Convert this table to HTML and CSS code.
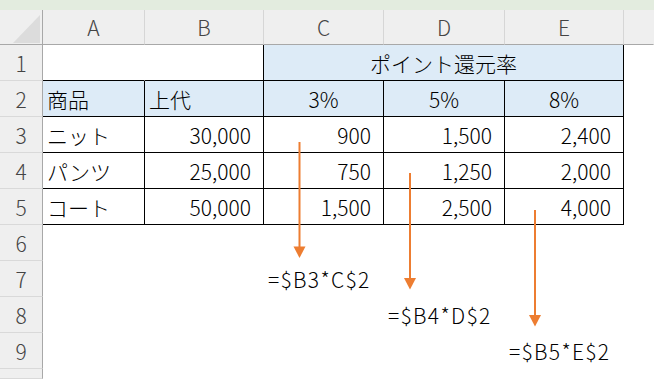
FILE: index.html
```html
<!DOCTYPE html>
<html lang="ja">
<head>
<meta charset="utf-8">
<title>ポイント還元率</title>
<link rel="stylesheet" href="styles.css">
</head>
<body>
<div class="app">
  <div class="topbar"></div>
  <div class="sheet">
    <div class="ch corner"><div class="tri"></div></div>
    <div class="ch">A</div>
    <div class="ch">B</div>
    <div class="ch">C</div>
    <div class="ch">D</div>
    <div class="ch">E</div>
    <div class="ch ch-last"></div>

    <div class="rh">1</div>
    <div class="c b-bottom"></div>
    <div class="c b-bottom b-right"></div>
    <div class="c fill b-right b-bottom center span3">ポイント還元率</div>
    <div class="c"></div>

    <div class="rh">2</div>
    <div class="c fill b-right b-bottom">商品</div>
    <div class="c fill b-right b-bottom">上代</div>
    <div class="c fill b-right b-bottom center">3%</div>
    <div class="c fill b-right b-bottom center">5%</div>
    <div class="c fill b-right b-bottom center">8%</div>
    <div class="c"></div>

    <div class="rh">3</div>
    <div class="c b-right b-bottom">ニット</div>
    <div class="c b-right b-bottom num">30,000</div>
    <div class="c b-right b-bottom num">900</div>
    <div class="c b-right b-bottom num">1,500</div>
    <div class="c b-right b-bottom num">2,400</div>
    <div class="c"></div>

    <div class="rh">4</div>
    <div class="c b-right b-bottom">パンツ</div>
    <div class="c b-right b-bottom num">25,000</div>
    <div class="c b-right b-bottom num">750</div>
    <div class="c b-right b-bottom num">1,250</div>
    <div class="c b-right b-bottom num">2,000</div>
    <div class="c"></div>

    <div class="rh">5</div>
    <div class="c b-right b-bottom">コート</div>
    <div class="c b-right b-bottom num">50,000</div>
    <div class="c b-right b-bottom num">1,500</div>
    <div class="c b-right b-bottom num">2,500</div>
    <div class="c b-right b-bottom num">4,000</div>
    <div class="c"></div>

    <div class="rh">6</div>
    <div class="c"></div><div class="c"></div><div class="c"></div><div class="c"></div><div class="c"></div><div class="c"></div>

    <div class="rh">7</div>
    <div class="c"></div><div class="c"></div>
    <div class="c formula">=$B3*C$2</div>
    <div class="c"></div><div class="c"></div><div class="c"></div>

    <div class="rh">8</div>
    <div class="c"></div><div class="c"></div><div class="c"></div>
    <div class="c formula">=$B4*D$2</div>
    <div class="c"></div><div class="c"></div>

    <div class="rh">9</div>
    <div class="c"></div><div class="c"></div><div class="c"></div><div class="c"></div>
    <div class="c formula">=$B5*E$2</div>
    <div class="c"></div>

    <div class="rh"></div>
    <div class="c"></div><div class="c"></div><div class="c"></div><div class="c"></div><div class="c"></div><div class="c"></div>

    <svg class="arrows" width="654" height="369" viewBox="0 10 654 369" aria-hidden="true">
      <g stroke="#ed7d31" stroke-width="2" fill="none">
        <line x1="299.5" y1="142" x2="299.5" y2="248"/>
        <line x1="410" y1="173" x2="410" y2="279"/>
        <line x1="535" y1="210" x2="535" y2="316"/>
      </g>
      <g fill="#ed7d31">
        <polygon points="293.5,246.5 305.5,246.5 299.5,258"/>
        <polygon points="404,278 416,278 410,289.5"/>
        <polygon points="529,315 541,315 535,326.5"/>
      </g>
    </svg>
  </div>
</div>
</body>
</html>
```
FILE: styles.css
```css
html, body {
  margin: 0;
  padding: 0;
  background: #ffffff;
}
body {
  width: 654px;
  height: 379px;
  overflow: hidden;
  font-family: "Noto Sans CJK JP", "Noto Sans", sans-serif;
  font-weight: 300;
}
.app {
  display: flex;
  flex-direction: column;
  height: 379px;
}
.topbar {
  height: 10px;
  background: #e3ecdf;
  flex: none;
}
.sheet {
  position: relative;
  flex: 1;
  display: grid;
  grid-template-columns: 43px 102px 119px 120px 121px 119px 1fr;
  grid-template-rows: 35px repeat(9, 36px) 1fr;
  overflow: hidden;
}
.ch, .rh, .c {
  box-sizing: border-box;
  border-right: 1px solid transparent;
  border-bottom: 1px solid transparent;
  display: flex;
  align-items: center;
  font-size: 21px;
  white-space: nowrap;
  min-width: 0;
}
.ch {
  background: #efefef;
  color: #444444;
  justify-content: center;
  border-right-color: #d6d6d6;
  border-bottom-color: #a8a8a8;
  padding-bottom: 1px;
}
.ch-last {
  border-right-color: transparent;
}
.corner {
  border-right-color: #a8a8a8;
  justify-content: flex-end;
  align-items: flex-end;
  padding: 0 2px 1px 0;
}
.tri {
  width: 27px;
  height: 28px;
  background: #dcdcdc;
  clip-path: polygon(100% 0, 100% 100%, 0 100%);
}
.rh {
  background: #efefef;
  color: #444444;
  justify-content: center;
  border-right-color: #a8a8a8;
  border-bottom-color: #d9d9d9;
}
.c {
  color: #000000;
  padding: 0 4px;
}
.fill {
  background: #ddebf7;
}
.b-right {
  border-right-color: #000000;
}
.b-bottom {
  border-bottom-color: #000000;
}
.center {
  justify-content: center;
}
.num {
  justify-content: flex-end;
  padding-right: 12px;
}
.span3 {
  grid-column: span 3;
}
.formula {
  padding-left: 4px;
  letter-spacing: 1.3px;
  overflow: visible;
}
.arrows {
  position: absolute;
  left: 0;
  top: 0;
  pointer-events: none;
}
```
